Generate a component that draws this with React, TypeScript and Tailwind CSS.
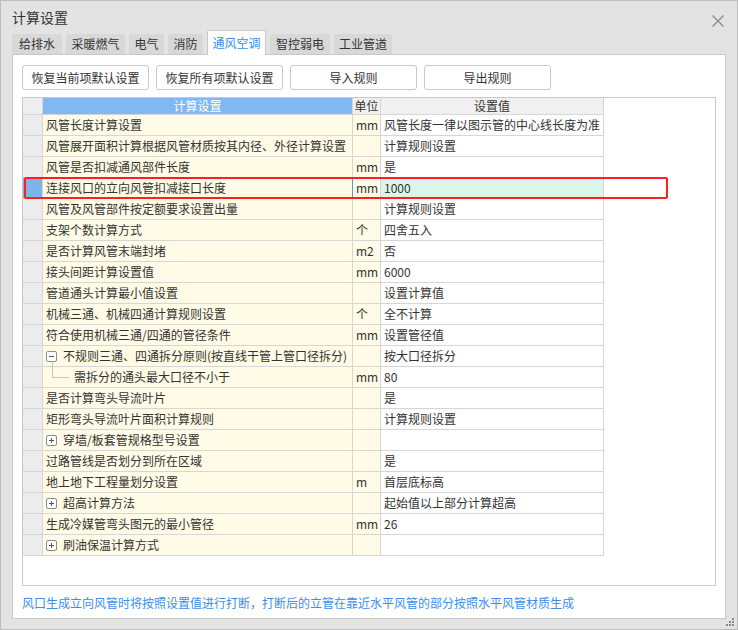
import React from "react";

type Row = { name: string; unit?: string; value?: string; expand?: "+" | "-"; child?: boolean; selected?: boolean };

const rows: Row[] = [
  { name: "风管长度计算设置", unit: "mm", value: "风管长度一律以图示管的中心线长度为准" },
  { name: "风管展开面积计算根据风管材质按其内径、外径计算设置", value: "计算规则设置" },
  { name: "风管是否扣减通风部件长度", unit: "mm", value: "是" },
  { name: "连接风口的立向风管扣减接口长度", unit: "mm", value: "1000", selected: true },
  { name: "风管及风管部件按定额要求设置出量", value: "计算规则设置" },
  { name: "支架个数计算方式", unit: "个", value: "四舍五入" },
  { name: "是否计算风管末端封堵", unit: "m2", value: "否" },
  { name: "接头间距计算设置值", unit: "mm", value: "6000" },
  { name: "管道通头计算最小值设置", value: "设置计算值" },
  { name: "机械三通、机械四通计算规则设置", unit: "个", value: "全不计算" },
  { name: "符合使用机械三通/四通的管径条件", unit: "mm", value: "设置管径值" },
  { name: "不规则三通、四通拆分原则(按直线干管上管口径拆分)", value: "按大口径拆分", expand: "-" },
  { name: "需拆分的通头最大口径不小于", unit: "mm", value: "80", child: true },
  { name: "是否计算弯头导流叶片", value: "是" },
  { name: "矩形弯头导流叶片面积计算规则", value: "计算规则设置" },
  { name: "穿墙/板套管规格型号设置", expand: "+" },
  { name: "过路管线是否划分到所在区域", value: "是" },
  { name: "地上地下工程量划分设置", unit: "m", value: "首层底标高" },
  { name: "超高计算方法", value: "起始值以上部分计算超高", expand: "+" },
  { name: "生成冷媒管弯头图元的最小管径", unit: "mm", value: "26" },
  { name: "刷油保温计算方式", expand: "+" },
];

const tabs: { label: string; w: string; active?: boolean }[] = [
  { label: "给排水", w: "w-[50px]" },
  { label: "采暖燃气", w: "w-[59px]" },
  { label: "电气", w: "w-[35px]" },
  { label: "消防", w: "w-[35px]" },
  { label: "通风空调", w: "w-[59px]", active: true },
  { label: "智控弱电", w: "w-[60px]" },
  { label: "工业管道", w: "w-[58px]" },
];

const buttons = ["恢复当前项默认设置", "恢复所有项默认设置", "导入规则", "导出规则"];

function ExpandBox({ sign }: { sign: "+" | "-" }) {
  return (
    <span className="w-[11px] h-[11px] border border-[#8c8c8c] rounded-[2px] bg-white flex items-center justify-center shrink-0 mr-[6px]">
      <svg width="7" height="7" viewBox="0 0 7 7">
        <line x1="1" y1="3.5" x2="6" y2="3.5" stroke="#555" strokeWidth="1" />
        {sign === "+" && <line x1="3.5" y1="1" x2="3.5" y2="6" stroke="#555" strokeWidth="1" />}
      </svg>
    </span>
  );
}

export default function App() {
  return (
    <div
      className="w-[738px] h-[630px] bg-[#e3e3e3] border border-[#bdbdbd] relative flex flex-col text-[#333]"
      style={{ fontFamily: '"Noto Sans CJK SC", "Noto Sans", sans-serif' }}
    >
      {/* title */}
      <div className="h-[28px] flex items-center pl-[11px] pt-[4px] text-[14px] leading-none">计算设置</div>
      <div className="absolute right-[13px] top-[14px]">
        <svg width="12" height="12" viewBox="0 0 12 12">
          <line x1="0.5" y1="0.5" x2="11.5" y2="11.5" stroke="#8a8a8a" strokeWidth="1.2" />
          <line x1="11.5" y1="0.5" x2="0.5" y2="11.5" stroke="#8a8a8a" strokeWidth="1.2" />
        </svg>
      </div>

      {/* tabs */}
      <div className="flex items-end gap-[4px] ml-[11px] h-[25px] relative z-10">
        {tabs.map((t) =>
          t.active ? (
            <div
              key={t.label}
              className={`${t.w} h-[25px] bg-white border border-b-0 border-[#c8c8c8] rounded-t-[2px] flex items-center justify-center text-[12px] text-[#3a8ee6] mb-[-1px]`}
            >
              {t.label}
            </div>
          ) : (
            <div
              key={t.label}
              className={`${t.w} h-[20px] bg-[#d8d8d8] rounded-t-[2px] flex items-center justify-center text-[12px] text-[#333]`}
            >
              {t.label}
            </div>
          )
        )}
      </div>

      {/* panel */}
      <div className="mx-[11px] h-[565px] bg-white border border-[#c8c8c8] flex flex-col px-[9px] pt-[10px]">
        <div className="flex gap-[7px] h-[25px]">
          {buttons.map((b) => (
            <div
              key={b}
              className="w-[127px] h-[25px] border border-[#c8c8c8] rounded-[3px] bg-white flex items-center justify-center text-[12px] text-[#333]"
            >
              {b}
            </div>
          ))}
        </div>

        {/* table container */}
        <div className="mt-[7px] h-[489px] border border-[#c8c8c8] relative text-[12px] leading-none">
          <div className="w-[581px]">
            {/* header */}
            <div className="flex h-[17px] border-b border-[#d6d6d6]">
              <div className="w-[20px] bg-[#eeeeee] border-r border-[#d6d6d6]" />
              <div className="w-[310px] bg-[#7fb8f2] border-r border-[#d6d6d6] text-white flex items-center justify-center">
                计算设置
              </div>
              <div className="w-[28px] bg-[#f0f0f0] border-r border-[#d6d6d6] flex items-center justify-center">单位</div>
              <div className="w-[223px] bg-[#f0f0f0] border-r border-[#d6d6d6] flex items-center justify-center">设置值</div>
            </div>
            {rows.map((r, i) => (
              <div key={i} className="flex h-[21px] border-b border-[#d6d6d6]">
                <div
                  className={`w-[20px] border-r border-[#d6d6d6] ${r.selected ? "bg-[#7db4ea]" : "bg-[#ececec]"}`}
                />
                <div
                  className={`w-[310px] bg-[#fffbe6] border-r ${r.selected ? "border-[#5b9bd5]" : "border-[#d6d6d6]"} flex items-center pl-[3px] relative whitespace-nowrap`}
                >
                  {r.child && (
                    <>
                      <span className="absolute left-[9px] top-[-6px] w-px h-[16px] bg-[#c4c4c4]" />
                      <span className="absolute left-[9px] top-[10px] w-[17px] h-px bg-[#c4c4c4]" />
                    </>
                  )}
                  {r.expand && <ExpandBox sign={r.expand} />}
                  <span className={r.child ? "pl-[28px]" : ""}>{r.name}</span>
                </div>
                <div className="w-[28px] bg-[#fffbe6] border-r border-[#d6d6d6] flex items-center pl-[3px]">{r.unit}</div>
                <div
                  className={`w-[223px] border-r border-[#d6d6d6] flex items-center pl-[3px] whitespace-nowrap ${r.selected ? "bg-[#dcf5ea]" : "bg-white"}`}
                >
                  {r.value}
                </div>
              </div>
            ))}
          </div>
          {/* red highlight */}
          <div className="absolute left-[1px] top-[79px] w-[644px] h-[22px] border-2 border-[#ff1f1f] rounded-[2px] pointer-events-none" />
        </div>

        <div className="mt-[9px] text-[12px] leading-[16px] text-[#3a8ef0] whitespace-nowrap">
          风口生成立向风管时将按照设置值进行打断，打断后的立管在靠近水平风管的部分按照水平风管材质生成
        </div>
      </div>

      {/* resize grip */}
      <div className="absolute right-[2px] bottom-[2px]">
        <svg width="10" height="10" viewBox="0 0 10 10">
          <rect x="7" y="1" width="2" height="2" fill="#8a8a8a" />
          <rect x="4" y="4" width="2" height="2" fill="#8a8a8a" />
          <rect x="7" y="4" width="2" height="2" fill="#8a8a8a" />
          <rect x="1" y="7" width="2" height="2" fill="#8a8a8a" />
          <rect x="4" y="7" width="2" height="2" fill="#8a8a8a" />
          <rect x="7" y="7" width="2" height="2" fill="#8a8a8a" />
        </svg>
      </div>
    </div>
  );
}
